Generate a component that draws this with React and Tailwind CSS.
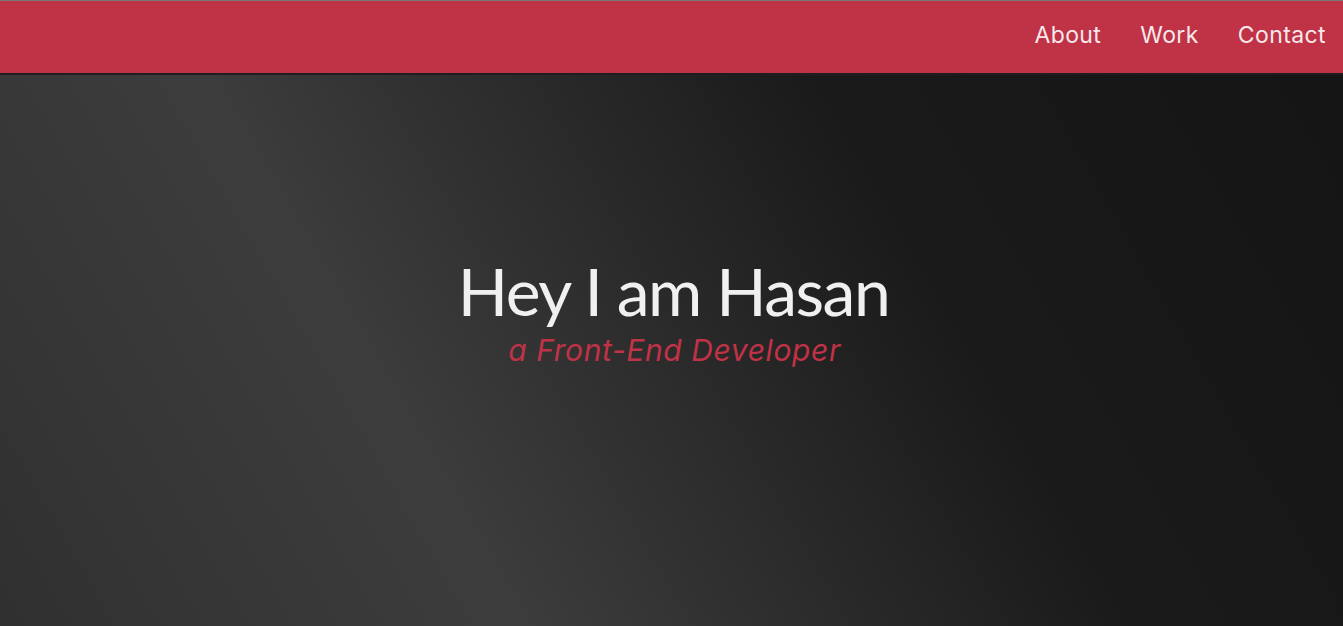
export default function App() {
  const links = ["About", "Work", "Contact"];

  return (
    <div className="h-[626px] flex flex-col overflow-hidden font-['Inter',sans-serif]">
      {/* Nav */}
      <header className="h-[73px] shrink-0 bg-[#c03246] border-t border-[#777] shadow-[0_2px_0_#1e1e1e] flex items-center justify-end pr-[17px] z-10">
        <nav className="flex gap-[39px] pb-[4px]">
          {links.map((l) => (
            <a key={l} href="#" className="text-[23px] text-[#f7e9eb] tracking-[0.4px]">
              {l}
            </a>
          ))}
        </nav>
      </header>

      {/* Hero */}
      <main className="flex-1 bg-[linear-gradient(60deg,#303030_0%,#3d3d3d_31%,#1a1a1a_68%,#151515_100%)] flex flex-col items-center pt-[178px]">
        <h1 className="font-['Lato',sans-serif] text-[66px] leading-[80px] text-[#f0f0f0] tracking-[-1.5px] ml-[4px]">
          Hey I am Hasan
        </h1>
        <p className="italic text-[30px] leading-[36px] text-[#c03246] mt-[1px] ml-[6px] tracking-[0.6px]">
          a Front-End Developer
        </p>
      </main>
    </div>
  );
}
